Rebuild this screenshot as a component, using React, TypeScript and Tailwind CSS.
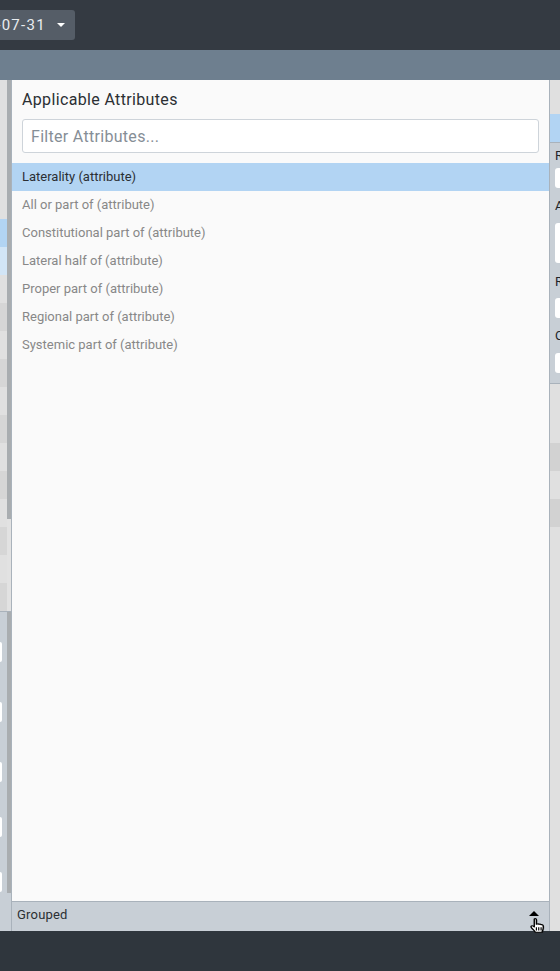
const attributes = [
  'All or part of (attribute)',
  'Constitutional part of (attribute)',
  'Lateral half of (attribute)',
  'Proper part of (attribute)',
  'Regional part of (attribute)',
  'Systemic part of (attribute)',
];

const HAND =
  'M4.500 1.500c.9-.6 2 0 2 1v5l1-.3c.7-.2 1.300 0 1.600.4.7-.3 1.400-.1 1.800.4.8-.3 1.700.1 1.900 1 .3 1.300.2 3-.2 4.600-.3 1.200-.6 2-.9 2.900H5.500C4.800 15 3.300 13.400 2 11.600c-.7-1-.7-1.800-.1-2.200.6-.4 1.400-.1 2.600 1.100V2.500c0-.4 0-.8 0-1z';

function HandCursor() {
  return (
    <svg
      width="16"
      height="16"
      viewBox="0.5 0.500 15 18"
      preserveAspectRatio="none"
      className="absolute left-[518px] top-[16px]"
    >
      <path d={HAND} fill="#000" opacity="0.3" transform="translate(1 0.600)" />
      <path d={HAND} fill="#fff" stroke="#000" strokeWidth="1.300" strokeLinejoin="round" />
      <path d="M6.500 11v3.500M8.700 11v3.500M10.900 11v3.500" stroke="#000" strokeWidth="1.100" />
    </svg>
  );
}

function LeftColumn() {
  const rows = Array.from({ length: 12 }, (_, i) => i);
  return (
    <div className="w-[12px] shrink-0 flex flex-col overflow-hidden border-r border-[#a9b2bb]">
      <div className="flex h-[531px] shrink-0">
        <div className="flex w-[7px] flex-col">
          <div className="h-[139px] bg-[#e0e0e0]" />
          <div className="h-[28px] bg-[#b2d4f3]" />
          <div className="h-[28px] bg-[#d2e5f6]" />
          {rows.map((i) => (
            <div key={i} className={i % 2 === 0 ? 'h-[28px] bg-[#e0e0e0]' : 'h-[28px] bg-[#d6d6d6]'} />
          ))}
        </div>
        <div className="flex w-[4px] flex-col bg-[#e2e2e2]">
          <div className="h-[439px] bg-[#a9adb0]" />
        </div>
      </div>
      <div className="flex flex-1 border-t border-[#a9b2bb] bg-[#c8cfd6]">
        <div className="flex w-[7px] flex-col pt-[30px]">
          <div className="mb-[40px] h-[20px] w-[2px] rounded-r-[2px] bg-white" />
          <div className="mb-[40px] h-[20px] w-[2px] rounded-r-[2px] bg-white" />
          <div className="mb-[35px] h-[20px] w-[2px] rounded-r-[2px] bg-white" />
          <div className="mb-[35px] h-[20px] w-[2px] rounded-r-[2px] bg-white" />
          <div className="h-[20px] w-[2px] rounded-r-[2px] bg-white" />
        </div>
        <div className="h-[281px] w-[4px] bg-[#a9adb0]" />
      </div>
    </div>
  );
}

function RightColumn() {
  const label = 'h-[17px] pl-[5px] text-[13px] leading-[17px] text-[#212529] whitespace-nowrap';
  const field = 'ml-[5px] h-[20px] rounded-l-[3px] bg-white';
  return (
    <div className="flex-1 min-w-0 flex flex-col overflow-hidden border-l border-[#a9b2bb]">
      <div className="h-[34px] shrink-0 bg-[#e0e0e0]" />
      <div className="h-[28px] shrink-0 bg-[#b2d4f3]" />
      <div className="flex h-[242px] shrink-0 flex-col border-y border-[#a9b2bb] bg-[#c8cfd6] pt-[4px]">
        <div className={label}>Refset</div>
        <div className={`${field} mt-[4px]`} />
        <div className={`${label} mt-[9px]`}>Attribute</div>
        <div className="ml-[5px] mt-[9px] h-[40px] rounded-l-[3px] bg-white" />
        <div className={`${label} mt-[10px]`}>Range</div>
        <div className={`${field} mt-[8px]`} />
        <div className={`${label} mt-[9px]`}>Cardinality</div>
        <div className={`${field} mt-[9px]`} />
      </div>
      <div className="h-[59px] shrink-0 bg-[#e0e0e0]" />
      <div className="h-[28px] shrink-0 bg-[#d2d2d2]" />
      <div className="h-[28px] shrink-0 bg-[#e0e0e0]" />
      <div className="h-[28px] shrink-0 bg-[#d2d2d2]" />
      <div className="flex-1 bg-[#e0e0e0]" />
    </div>
  );
}

export default function App() {
  return (
    <div className="flex h-[971px] w-[560px] flex-col overflow-hidden bg-[#343a42] font-['Roboto',sans-serif]">
      <header className="flex h-[50px] shrink-0 items-center bg-[#343a42]">
        <div className="flex w-[75px] justify-end overflow-hidden">
          <button className="flex h-[30px] shrink-0 items-center gap-[11px] rounded-[3px] bg-[#555d67] pl-3 pr-[10px] text-[15px] tracking-[1.3px] text-[#e9ecef]">
            2021-07-31
            <span className="h-0 w-0 border-x-[4px] border-t-[4px] border-x-transparent border-t-white" />
          </button>
        </div>
      </header>
      <div className="h-[30px] shrink-0 bg-[#6e7f8f]" />
      <main className="flex min-h-0 flex-1">
        <LeftColumn />
        <section className="flex w-[537px] shrink-0 flex-col bg-[#fafafa]">
          <div className="px-[10px] pt-[9px]">
            <h2 className="text-[16px] leading-[21px] tracking-[0.35px] text-[#2b2f33]">Applicable Attributes</h2>
            <input
              readOnly
              placeholder="Filter Attributes..."
              className="mt-[9px] h-[34px] w-[517px] rounded-[3px] border border-[#ced4da] bg-white px-2 text-[16px] tracking-[0.3px] text-[#495057] outline-none placeholder:text-[#868e96]"
            />
          </div>
          <ul className="mt-[10px] flex-1 text-[13px]">
            <li className="flex h-[28px] items-center bg-[#b2d4f3] px-[10px] text-[#2b2f33]">Laterality (attribute)</li>
            {attributes.map((a) => (
              <li key={a} className="flex h-[28px] items-center px-[10px] text-[#888888]">
                {a}
              </li>
            ))}
          </ul>
          <footer className="relative flex h-[30px] shrink-0 items-center border-t border-[#a9b2bb] bg-[#c8cfd6] pb-[3px] pl-[5px] text-[13px] tracking-[0.2px] text-[#2b2f33]">
            Grouped
            <span className="absolute left-[517px] top-[9px] h-0 w-0 border-x-[5px] border-b-[5px] border-x-transparent border-b-black" />
            <HandCursor />
          </footer>
        </section>
        <RightColumn />
      </main>
      <div className="h-[40px] shrink-0 bg-[#2f363d]" />
    </div>
  );
}
